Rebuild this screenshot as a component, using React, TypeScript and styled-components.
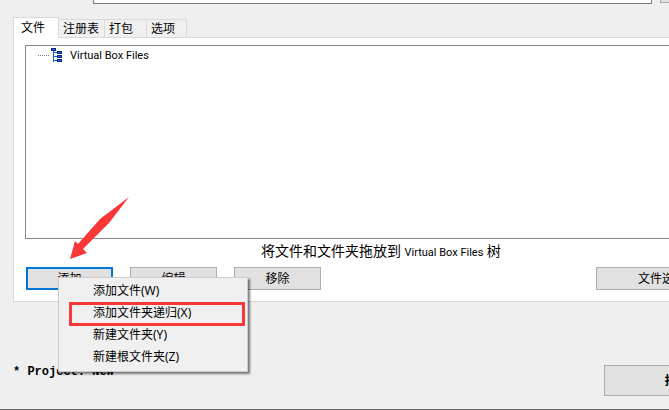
import React from "react";
import styled, { createGlobalStyle, css } from "styled-components";

const GlobalStyle = createGlobalStyle`
  * { box-sizing: border-box; }
  body {
    margin: 0;
    background: #efefef;
    color: #000;
    font: 12px/16px "Liberation Sans", "Noto Sans CJK SC", sans-serif;
  }
  button, input { font: inherit; color: inherit; }
`;

const Viewport = styled.div`
  min-height: 100vh;
  overflow: hidden;
  display: flex;
  flex-direction: column;
  background: #efefef;
`;

/* The dialog is wider than the visible area and runs off to the right. */
const Dialog = styled.main`
  width: calc(100% + 80px);
  flex: 1;
  display: flex;
  flex-direction: column;
`;

const PathRow = styled.div`
  height: 4px;
  display: flex;
  align-items: flex-end;
  gap: 8px;
  padding-left: 93px;
  padding-right: 8px;
`;

const PathInput = styled.input`
  flex: 1;
  height: 22px;
  border: 1px solid #7a7a7a;
  background: #fff;
  padding: 0 4px;
`;

const BrowseButton = styled.button`
  width: 81px;
  height: 24px;
  margin-bottom: 1px;
  border: 1px solid #adadad;
  background: #e1e1e1;
`;

const Tabs = styled.div`
  display: flex;
  align-items: flex-end;
  height: 21px;
  margin: 13px 0 0 13px;
`;

const Tab = styled.button<{ $active?: boolean; $width: number }>`
  width: ${(p) => p.$width}px;
  height: 19px;
  padding: 0 0 0 4px;
  border: 1px solid #d9d9d9;
  border-left: 0;
  background: #f0f0f0;
  text-align: left;
  line-height: 18px;
  ${(p) =>
    p.$active &&
    css`
      height: 21px;
      padding-left: 7px;
      border-left: 1px solid #d9d9d9;
      border-bottom: 0;
      background: #fff;
    `}
`;

const TabLine = styled.div`
  flex: 1;
  border-bottom: 1px solid #d9d9d9;
`;

const Panel = styled.section`
  margin-left: 13px;
  padding: 7px 12px 11px;
  padding-right: 0;
  border-left: 1px solid #d9d9d9;
  border-bottom: 1px solid #d9d9d9;
  background: #fff;
`;

const Tree = styled.div`
  height: 194px;
  margin-left: -1px;
  padding: 2px 0 0 12px;
  border: 1px solid #828790;
  background: #fff;
`;

const latin = css`
  font-family: Roboto, "Noto Sans CJK SC", sans-serif;
`;

const TreeItem = styled.div`
  ${latin}
  display: flex;
  align-items: center;
  height: 15px;
  font-size: 11px;
  line-height: 14px;
`;

const TreeBranch = styled.span`
  width: 11px;
  margin-right: 2px;
  border-top: 1px dotted #808080;
`;

const TreeIcon = styled.svg`
  width: 12px;
  height: 15px;
  margin-right: 7px;
`;

const Hint = styled.p`
  ${latin}
  margin: 2px 0 0 235px;
  height: 20px;
  font-size: 14px;
  line-height: 20px;
`;

const HintName = styled.span`
  font-size: 11px;
`;

const Actions = styled.div`
  display: flex;
  gap: 17px;
  margin-top: 6px;
`;

const ActionSlot = styled.div`
  position: relative;
  display: flex;
`;

const ActionButton = styled.button<{ $focused?: boolean; $wide?: boolean }>`
  width: ${(p) => (p.$wide ? 132 : 87)}px;
  height: 23px;
  padding: 0;
  border: ${(p) => (p.$focused ? "2px solid #0078d7" : "1px solid #adadad")};
  background: #e1e1e1;
  line-height: 20px;
`;

const Spacer = styled.div`
  flex: 1;
`;

const EndSlot = styled.div`
  padding-right: 21px;
`;

const Menu = styled.ul`
  position: absolute;
  z-index: 2;
  left: 32px;
  top: 10px;
  width: 190px;
  margin: 0;
  padding: 2px 2px 3px;
  list-style: none;
  border: 1px solid #ccc;
  background: #f0f0f0;
  box-shadow: 2px 2px 2px rgba(0, 0, 0, 0.5);
`;

const MenuItem = styled.button`
  display: block;
  width: 100%;
  height: 22px;
  padding: 0 0 0 32px;
  border: 0;
  background: transparent;
  text-align: left;
  font-family: "Noto Sans", "Noto Sans CJK SC", sans-serif;
  line-height: 22px;
  white-space: nowrap;
`;

const Highlight = styled.div`
  position: absolute;
  left: 10px;
  top: 24px;
  width: 176px;
  height: 24px;
  border: 3px solid #fb3838;
  pointer-events: none;
`;

const Arrow = styled.svg`
  position: absolute;
  z-index: 3;
  left: 44px;
  bottom: 30px;
  width: 60px;
  height: 64px;
  pointer-events: none;
`;

const Footer = styled.footer`
  flex: 1;
  display: flex;
  justify-content: space-between;
  align-items: flex-start;
  padding: 63px 0 0 13px;
  border-bottom: 1px solid #6b6868;
`;

const Status = styled.span`
  font: bold 12px/14px "Liberation Mono", monospace;
`;

const BuildButton = styled.button`
  width: 145px;
  height: 31px;
  padding: 0;
  border: 1px solid #adadad;
  background: #e1e1e1;
  font-weight: bold;
`;

const menuItems = ["添加文件(W)", "添加文件夹递归(X)", "新建文件夹(Y)", "新建根文件夹(Z)"];

function FilesIcon() {
  return (
    <TreeIcon viewBox="0 0 12 15" shapeRendering="crispEdges" aria-hidden="true">
      <path d="M2 3h1v11H2zM3 4h3v1H3zM3 8h3v1H3zM3 12h3v1H3z" fill="#1260d4" />
      <path d="M0 0h5v3H0zM6 3h5v3H6zM6 7h5v3H6zM6 11h5v3H6z" fill="#08267d" />
      <path d="M1 1h3v1H1zM7 4h3v1H7zM7 8h3v1H7zM7 12h3v1H7z" fill="#1f6ce0" />
    </TreeIcon>
  );
}

export default function App() {
  return (
    <>
      <GlobalStyle />
      <Viewport>
        <Dialog>
          <PathRow>
            <PathInput type="text" aria-label="输出文件" />
            <BrowseButton type="button" aria-label="浏览" />
          </PathRow>

          <Tabs role="tablist">
            <Tab type="button" role="tab" aria-selected="true" $active $width={46}>文件</Tab>
            <Tab type="button" role="tab" aria-selected="false" $width={46}>注册表</Tab>
            <Tab type="button" role="tab" aria-selected="false" $width={42}>打包</Tab>
            <Tab type="button" role="tab" aria-selected="false" $width={40}>选项</Tab>
            <TabLine />
          </Tabs>

          <Panel role="tabpanel" aria-label="文件">
            <Tree role="tree" aria-label="Virtual Box">
              <TreeItem role="treeitem">
                <TreeBranch />
                <FilesIcon />
                Virtual Box Files
              </TreeItem>
            </Tree>
            <Hint>
              将文件和文件夹拖放到 <HintName>Virtual Box Files</HintName> 树
            </Hint>
            <Actions>
              <ActionSlot>
                <ActionButton type="button" aria-haspopup="menu" aria-expanded="true" $focused>
                  添加
                </ActionButton>
                <Menu role="menu">
                  {menuItems.map((label) => (
                    <li key={label} role="none">
                      <MenuItem type="button" role="menuitem">{label}</MenuItem>
                    </li>
                  ))}
                  <Highlight />
                </Menu>
                <Arrow viewBox="0 0 60 64" aria-hidden="true">
                  <path d="M59 1 39 27 13 53 17 57 0 63 5 45 8 48 30 23Z" fill="#fb3838" />
                </Arrow>
              </ActionSlot>
              <ActionButton type="button">编辑</ActionButton>
              <ActionButton type="button">移除</ActionButton>
              <Spacer />
              <EndSlot>
                <ActionButton type="button" $wide>文件选项</ActionButton>
              </EndSlot>
            </Actions>
          </Panel>

          <Footer>
            <Status>* Project: New</Status>
            <BuildButton type="button">打包</BuildButton>
          </Footer>
        </Dialog>
      </Viewport>
    </>
  );
}
